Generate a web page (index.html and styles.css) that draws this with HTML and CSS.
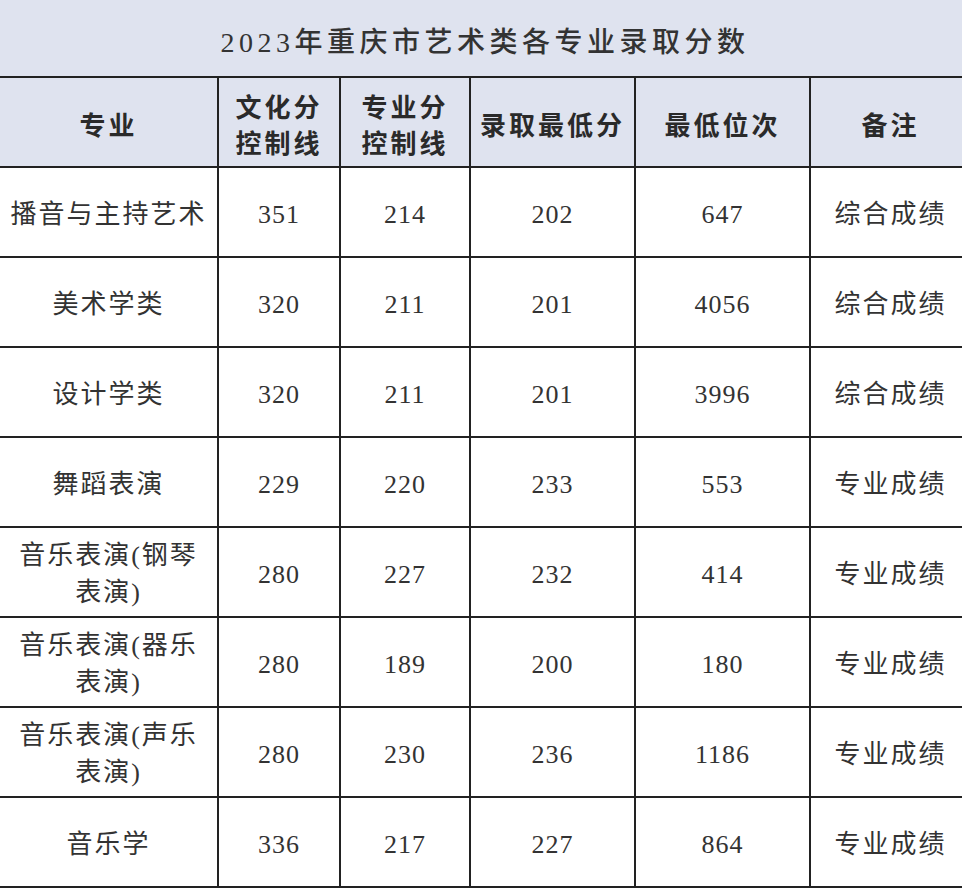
FILE: index.html
```html
<!DOCTYPE html>
<html lang="zh-CN">
<head>
<meta charset="utf-8">
<title>2023年重庆市艺术类各专业录取分数</title>
<link rel="stylesheet" href="styles.css">
</head>
<body>
<table class="score-table">
  <colgroup>
    <col class="c1"><col class="c2"><col class="c3"><col class="c4"><col class="c5"><col class="c6">
  </colgroup>
  <thead>
    <tr class="title-row"><th colspan="6" class="title">2023年重庆市艺术类各专业录取分数</th></tr>
    <tr class="head-row">
      <th>专业</th>
      <th>文化分<br>控制线</th>
      <th>专业分<br>控制线</th>
      <th>录取最低分</th>
      <th>最低位次</th>
      <th>备注</th>
    </tr>
  </thead>
  <tbody>
    <tr><td class="name">播音与主持艺术</td><td>351</td><td>214</td><td>202</td><td>647</td><td class="note">综合成绩</td></tr>
    <tr><td class="name">美术学类</td><td>320</td><td>211</td><td>201</td><td>4056</td><td class="note">综合成绩</td></tr>
    <tr><td class="name">设计学类</td><td>320</td><td>211</td><td>201</td><td>3996</td><td class="note">综合成绩</td></tr>
    <tr><td class="name">舞蹈表演</td><td>229</td><td>220</td><td>233</td><td>553</td><td class="note">专业成绩</td></tr>
    <tr><td class="name">音乐表演(钢琴<br>表演)</td><td>280</td><td>227</td><td>232</td><td>414</td><td class="note">专业成绩</td></tr>
    <tr><td class="name">音乐表演(器乐<br>表演)</td><td>280</td><td>189</td><td>200</td><td>180</td><td class="note">专业成绩</td></tr>
    <tr><td class="name">音乐表演(声乐<br>表演)</td><td>280</td><td>230</td><td>236</td><td>1186</td><td class="note">专业成绩</td></tr>
    <tr><td class="name">音乐学</td><td>336</td><td>217</td><td>227</td><td>864</td><td class="note">专业成绩</td></tr>
  </tbody>
</table>
</body>
</html>
```

FILE: styles.css
```css
html, body {
  margin: 0;
  padding: 0;
  background: #ffffff;
  overflow: hidden;
}

.score-table {
  border-collapse: collapse;
  table-layout: fixed;
  width: 970px;
  font-family: "Liberation Serif", "Noto Sans CJK SC", serif;
  color: #333333;
}

.c1 { width: 218px; }
.c2 { width: 122px; }
.c3 { width: 130px; }
.c4 { width: 165px; }
.c5 { width: 175px; }
.c6 { width: 160px; }

.score-table th,
.score-table td {
  border: 2px solid #222222;
  text-align: center;
  vertical-align: middle;
  padding: 0;
  white-space: nowrap;
}

.score-table th:first-child,
.score-table td:first-child {
  border-left: none;
}

.score-table th:last-child,
.score-table td:last-child {
  border-right: none;
}

.title-row {
  height: 77px;
  background: #dfe3ef;
}

.title {
  border-top: none !important;
  padding-top: 4px !important;
  font-size: 28px;
  font-weight: 500;
  letter-spacing: 4.5px;
  color: #333333;
}

.head-row {
  height: 90px;
  background: #dfe3ef;
}

.head-row th {
  padding-top: 9px;
  font-size: 26px;
  font-weight: 700;
  letter-spacing: 3px;
  line-height: 36px;
  color: #2a2a2a;
}

.score-table tbody tr {
  height: 90px;
}

.score-table td {
  padding-top: 4px;
  font-size: 26px;
  letter-spacing: 1px;
  line-height: 37px;
  font-weight: 400;
}

.score-table td.name,
.score-table td.note {
  letter-spacing: 2px;
}
```
